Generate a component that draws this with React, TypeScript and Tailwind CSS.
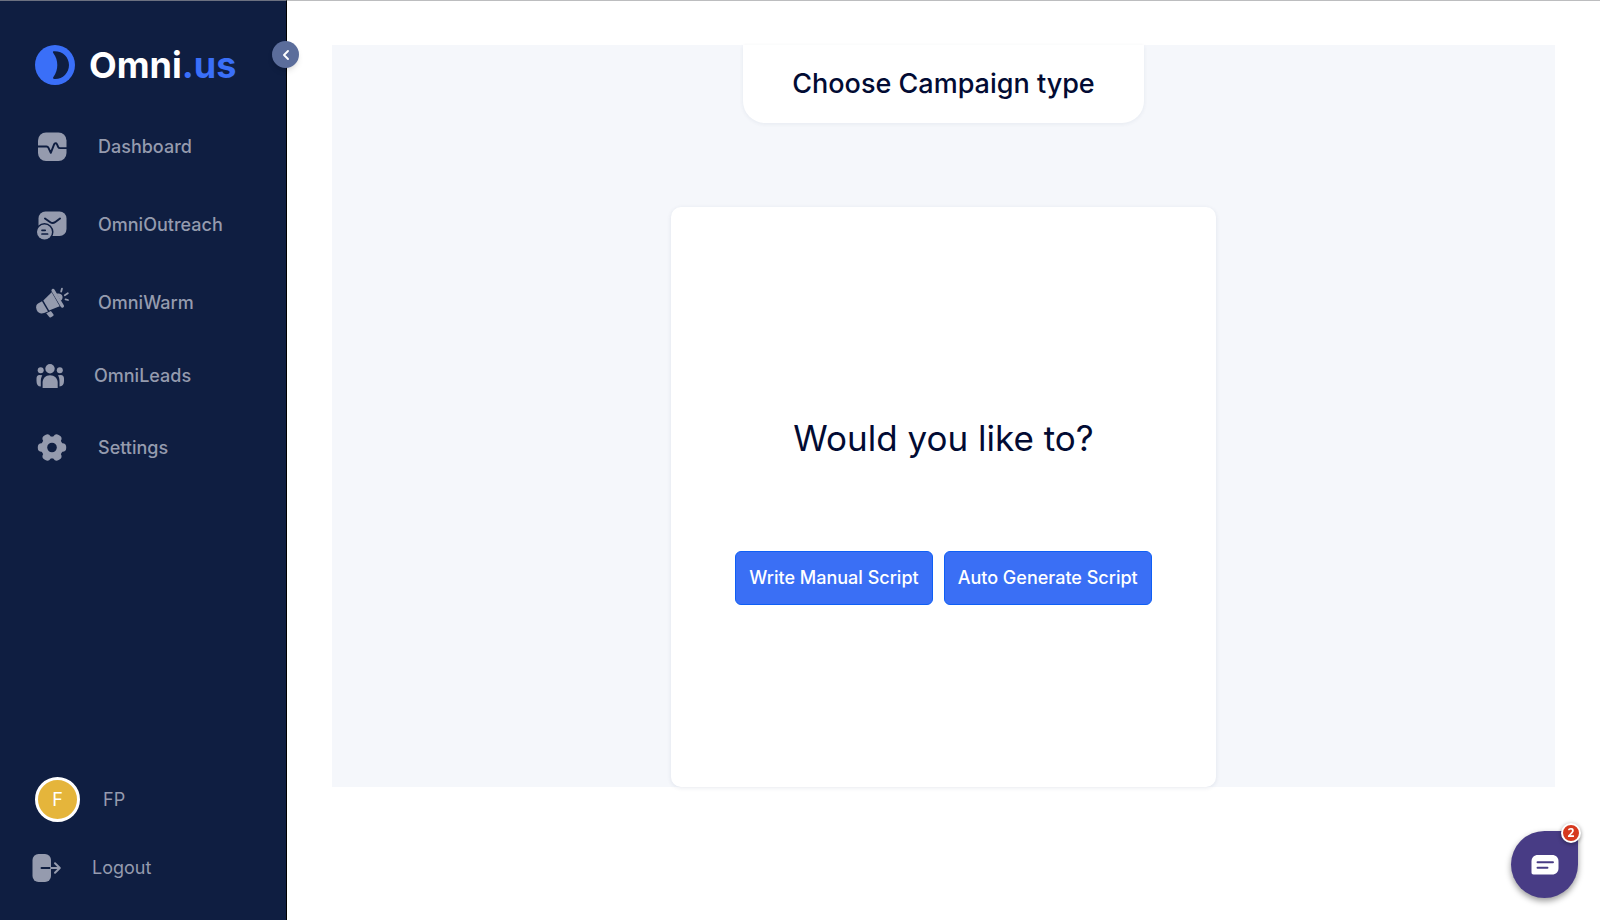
import type { ReactNode } from "react";

function LogoMark() {
  return (
    <svg viewBox="0 0 40 40" className="size-10" aria-hidden="true">
      <circle cx="20" cy="20" r="20" fill="#3a6ff8" />
      <path
        d="M18.500 6.200C27.500 5.600 34 12 34 20s-6.500 14.400-14.500 14c-1.600-.1-1.800-1-1.100-2 2.600-3.600 3.900-7.500 3.900-12s-1.300-8.200-3.900-11.800c-.7-1-.6-1.800.1-2z"
        fill="#0f1e41"
      />
    </svg>
  );
}

function DashboardIcon() {
  return (
    <svg viewBox="0 0 30 30" className="size-[30px]" aria-hidden="true">
      <rect x="1" y="0.500" width="28.500" height="28.500" rx="8" fill="currentColor" />
      <path
        d="M0 14.500h9.500c1 0 1.600.4 2 1.300l2.300 5 3.400-8.600c.5-1.300 2.100-1.300 2.700-.1l1.300 2.900c.4.800.9 1.100 1.800 1.100H30"
        fill="none"
        stroke="#0f1e41"
        strokeWidth="1.900"
        strokeLinejoin="round"
      />
    </svg>
  );
}

function OutreachIcon() {
  return (
    <svg viewBox="0 0 30 30" className="size-[30px]" aria-hidden="true">
      <rect x="1.500" y="1.500" width="28" height="24.500" rx="7" fill="currentColor" />
      <path d="M8 8.500l5.300 3.700c1.500 1 3.200 1 4.700 0L23 8.500" fill="none" stroke="#0f1e41" strokeWidth="2" strokeLinecap="round" />
      <circle cx="7.500" cy="22" r="9" fill="#0f1e41" />
      <circle cx="7.500" cy="22" r="7.500" fill="currentColor" />
      <path d="M5 20.300h3.200M5 24h5.600" stroke="#0f1e41" strokeWidth="1.700" strokeLinecap="round" />
    </svg>
  );
}

function MegaphoneIcon() {
  return (
    <svg viewBox="0 0 34 32" className="h-8 w-[34px]" aria-hidden="true">
      <g fill="currentColor">
        <path d="M2 16.600l4-2.400 6 10.400-3.900 1.500C4.900 27.300 1.800 26 .7 23c-.9-2.500-.8-5 1.300-6.400z" />
        <path d="M7.300 13.400L15.700 5.200l8 14-10.600 4.400z" />
        <path d="M16.300 2.100c.8-.5 1.800-.2 2.300.6l9.200 15.500c.5.800.2 1.800-.6 2.300-.8.500-1.800.2-2.300-.6L15.700 4.400c-.5-.8-.2-1.800.6-2.300z" />
        <path d="M20.500 6.800c2.800-.8 5.300.1 5.900 2.200.5 1.600 0 3.300-1.600 4.800z" />
        <path d="M10.200 26.200l4.700-2.100 2.300 2.800c.6.700.5 1.600-.2 2.100l-1.500 1.100c-.7.500-1.600.4-2.200-.2z" />
      </g>
      <path d="M25.200 4.600l.8-3M28.800 8.200l3-1.900M29.500 12.300l2.500.7" stroke="currentColor" strokeWidth="1.800" strokeLinecap="round" />
    </svg>
  );
}

function PeopleIcon() {
  return (
    <svg viewBox="0 0 28 24" className="h-6 w-7" aria-hidden="true">
      <g fill="currentColor">
        <circle cx="14" cy="4.800" r="4.700" />
        <circle cx="4.700" cy="6.300" r="3" />
        <circle cx="23.800" cy="6.300" r="3" />
        <path d="M6.600 24v-5.500c0-4 3-7.200 7.400-7.200s7.700 3.200 7.700 7.200V24z" />
        <path d="M6.300 11.200C5.200 13 4.800 15 4.800 17.500v5C1.800 22.500.5 20.500.5 17v-2.500c0-2.200 1-3.500 3-3.500z" />
        <path d="M22 11.200c1.100 1.800 1.500 3.800 1.500 6.300v5c3-0.100 4.500-2.100 4.500-5.500v-2.500c0-2.200-1.200-3.500-3.200-3.500z" />
      </g>
    </svg>
  );
}

function GearIcon() {
  return (
    <svg viewBox="0 0 30 30" className="size-[30px]" aria-hidden="true">
      <g fill="currentColor">
        <circle cx="15" cy="14.500" r="11" />
        <rect x="0.800" y="10.200" width="28.400" height="8.600" rx="3.800" />
        <rect x="0.800" y="10.200" width="28.400" height="8.600" rx="3.800" transform="rotate(60 15 14.500)" />
        <rect x="0.800" y="10.200" width="28.400" height="8.600" rx="3.800" transform="rotate(120 15 14.500)" />
      </g>
      <circle cx="15" cy="14.500" r="4.800" fill="#0f1e41" />
    </svg>
  );
}

function LogoutIcon() {
  return (
    <svg viewBox="0 0 30 28" className="h-7 w-[30px]" aria-hidden="true">
      <rect x="0.500" y="0" width="18.500" height="28" rx="6" fill="currentColor" />
      <path d="M9.500 14H19" stroke="#0f1e41" strokeWidth="1.900" strokeLinecap="round" />
      <path d="M19 14h8.500M23 9.200l4.800 4.800-4.800 4.800" fill="none" stroke="currentColor" strokeWidth="2" strokeLinecap="round" strokeLinejoin="round" />
    </svg>
  );
}

type Item = { label: string; icon: ReactNode; size: "regular" | "wide" | "compact" };

const items: Item[] = [
  { label: "Dashboard", icon: <DashboardIcon />, size: "regular" },
  { label: "OmniOutreach", icon: <OutreachIcon />, size: "regular" },
  { label: "OmniWarm", icon: <MegaphoneIcon />, size: "wide" },
  { label: "OmniLeads", icon: <PeopleIcon />, size: "compact" },
  { label: "Settings", icon: <GearIcon />, size: "regular" },
];

const rowClass = {
  regular: "flex h-[78px] items-center pl-[37px]",
  wide: "flex h-[78px] items-center pl-9",
  compact: "flex h-[67px] items-center pl-9",
};

const iconClass = {
  regular: "flex w-[61px]",
  wide: "flex w-[62px]",
  compact: "flex w-[58px]",
};

function Sidebar() {
  return (
    <aside className="relative flex w-[287px] shrink-0 flex-col border-t border-r border-t-[#6c7180] border-r-black bg-[#0f1e41] text-[#959bae]">
      <a href="#home" className="flex h-[106px] items-center gap-[14px] pt-[22px] pl-[35px]">
        <LogoMark />
        <span className="text-4xl font-bold text-white">
          Omni<span className="text-[#3a6ff8]">.us</span>
        </span>
      </a>

      <nav className="flex flex-col pt-px">
        {items.map((item) => (
          <a key={item.label} href={"#" + item.label.toLowerCase()} className={rowClass[item.size]}>
            <span className={iconClass[item.size]}>{item.icon}</span>
            <span className="text-lg font-medium">{item.label}</span>
          </a>
        ))}
      </nav>

      <div className="mt-auto flex flex-col gap-8 pb-[38px]">
        <a href="#profile" className="flex items-center gap-[23px] pl-[35px]">
          <span className="flex size-[45px] items-center justify-center rounded-full border-[3px] border-white bg-[#e5b53b] text-lg text-white">
            F
          </span>
          <span className="text-lg">FP</span>
        </a>
        <a href="#logout" className="flex items-center gap-[30px] pl-8">
          <LogoutIcon />
          <span className="text-lg">Logout</span>
        </a>
      </div>

      <button
        type="button"
        aria-label="Collapse menu"
        className="absolute top-10 -right-[13px] flex size-[27px] items-center justify-center rounded-full bg-[#5b6d9b] shadow-md"
      >
        <svg viewBox="0 0 10 12" className="h-3 w-[10px]" aria-hidden="true">
          <path d="M7 2L3 6l4 4" fill="none" stroke="#fff" strokeWidth="1.900" strokeLinecap="round" strokeLinejoin="round" />
        </svg>
      </button>
    </aside>
  );
}

function ActionButton({ children }: { children: ReactNode }) {
  return (
    <button
      type="button"
      className="h-[54px] rounded-md border border-[#0f5ff5] bg-[#3a6ff5] px-[13px] text-lg font-medium whitespace-nowrap text-white"
    >
      {children}
    </button>
  );
}

function ChatLauncher() {
  return (
    <div className="fixed right-[22px] bottom-[22px]">
      <button
        type="button"
        aria-label="Open chat"
        className="flex size-[67px] items-center justify-center rounded-full rounded-tr-md bg-[#483c85] shadow-[0_3px_6px_rgba(0,0,0,0.4)]"
      >
        <svg viewBox="0 0 28 20" className="h-5 w-7" aria-hidden="true">
          <path d="M7 0h14c4 0 6.500 2.500 6.500 6.500v6.500c0 4-2.500 6.500-6.500 6.500H2.500C1.200 19.500.5 18.800.5 17.500v-11C.5 2.500 3 0 7 0z" fill="#fff" />
          <path d="M6.500 7.200h15.500M6.500 12.800h10" stroke="#483c85" strokeWidth="1.900" strokeLinecap="round" />
        </svg>
      </button>
      <span className="absolute -top-2 -right-[3px] flex size-5 items-center justify-center rounded-full border-2 border-white bg-[#d6391f] font-['Open_Sans',sans-serif] text-xs font-bold text-white shadow-[0_1px_4px_rgba(0,0,0,0.4)]">
        2
      </span>
    </div>
  );
}

export default function App() {
  return (
    <div className="flex min-h-screen bg-white font-['Inter',sans-serif]">
      <Sidebar />
      <main className="min-w-0 flex-1 border-t border-[#bcbdbf] px-[45px] pt-11">
        <section className="flex flex-col items-center gap-[84px] bg-[#f5f7fb]">
          <h1 className="flex h-[78px] w-[401px] items-center justify-center rounded-b-[22px] bg-white text-[27px] font-medium text-[#020b33] shadow-[0_1px_4px_rgba(30,50,100,0.07)]">
            Choose Campaign type
          </h1>
          <div className="flex w-[545px] flex-col items-center rounded-[10px] bg-white pt-[204px] pb-[182px] shadow-[0_1px_4px_rgba(30,50,100,0.1)]">
            <h2 className="text-[35px] leading-[54px] text-[#020b33]">Would you like to?</h2>
            <div className="mt-[86px] flex gap-[11px]">
              <ActionButton>Write Manual Script</ActionButton>
              <ActionButton>Auto Generate Script</ActionButton>
            </div>
          </div>
        </section>
      </main>
      <ChatLauncher />
    </div>
  );
}
